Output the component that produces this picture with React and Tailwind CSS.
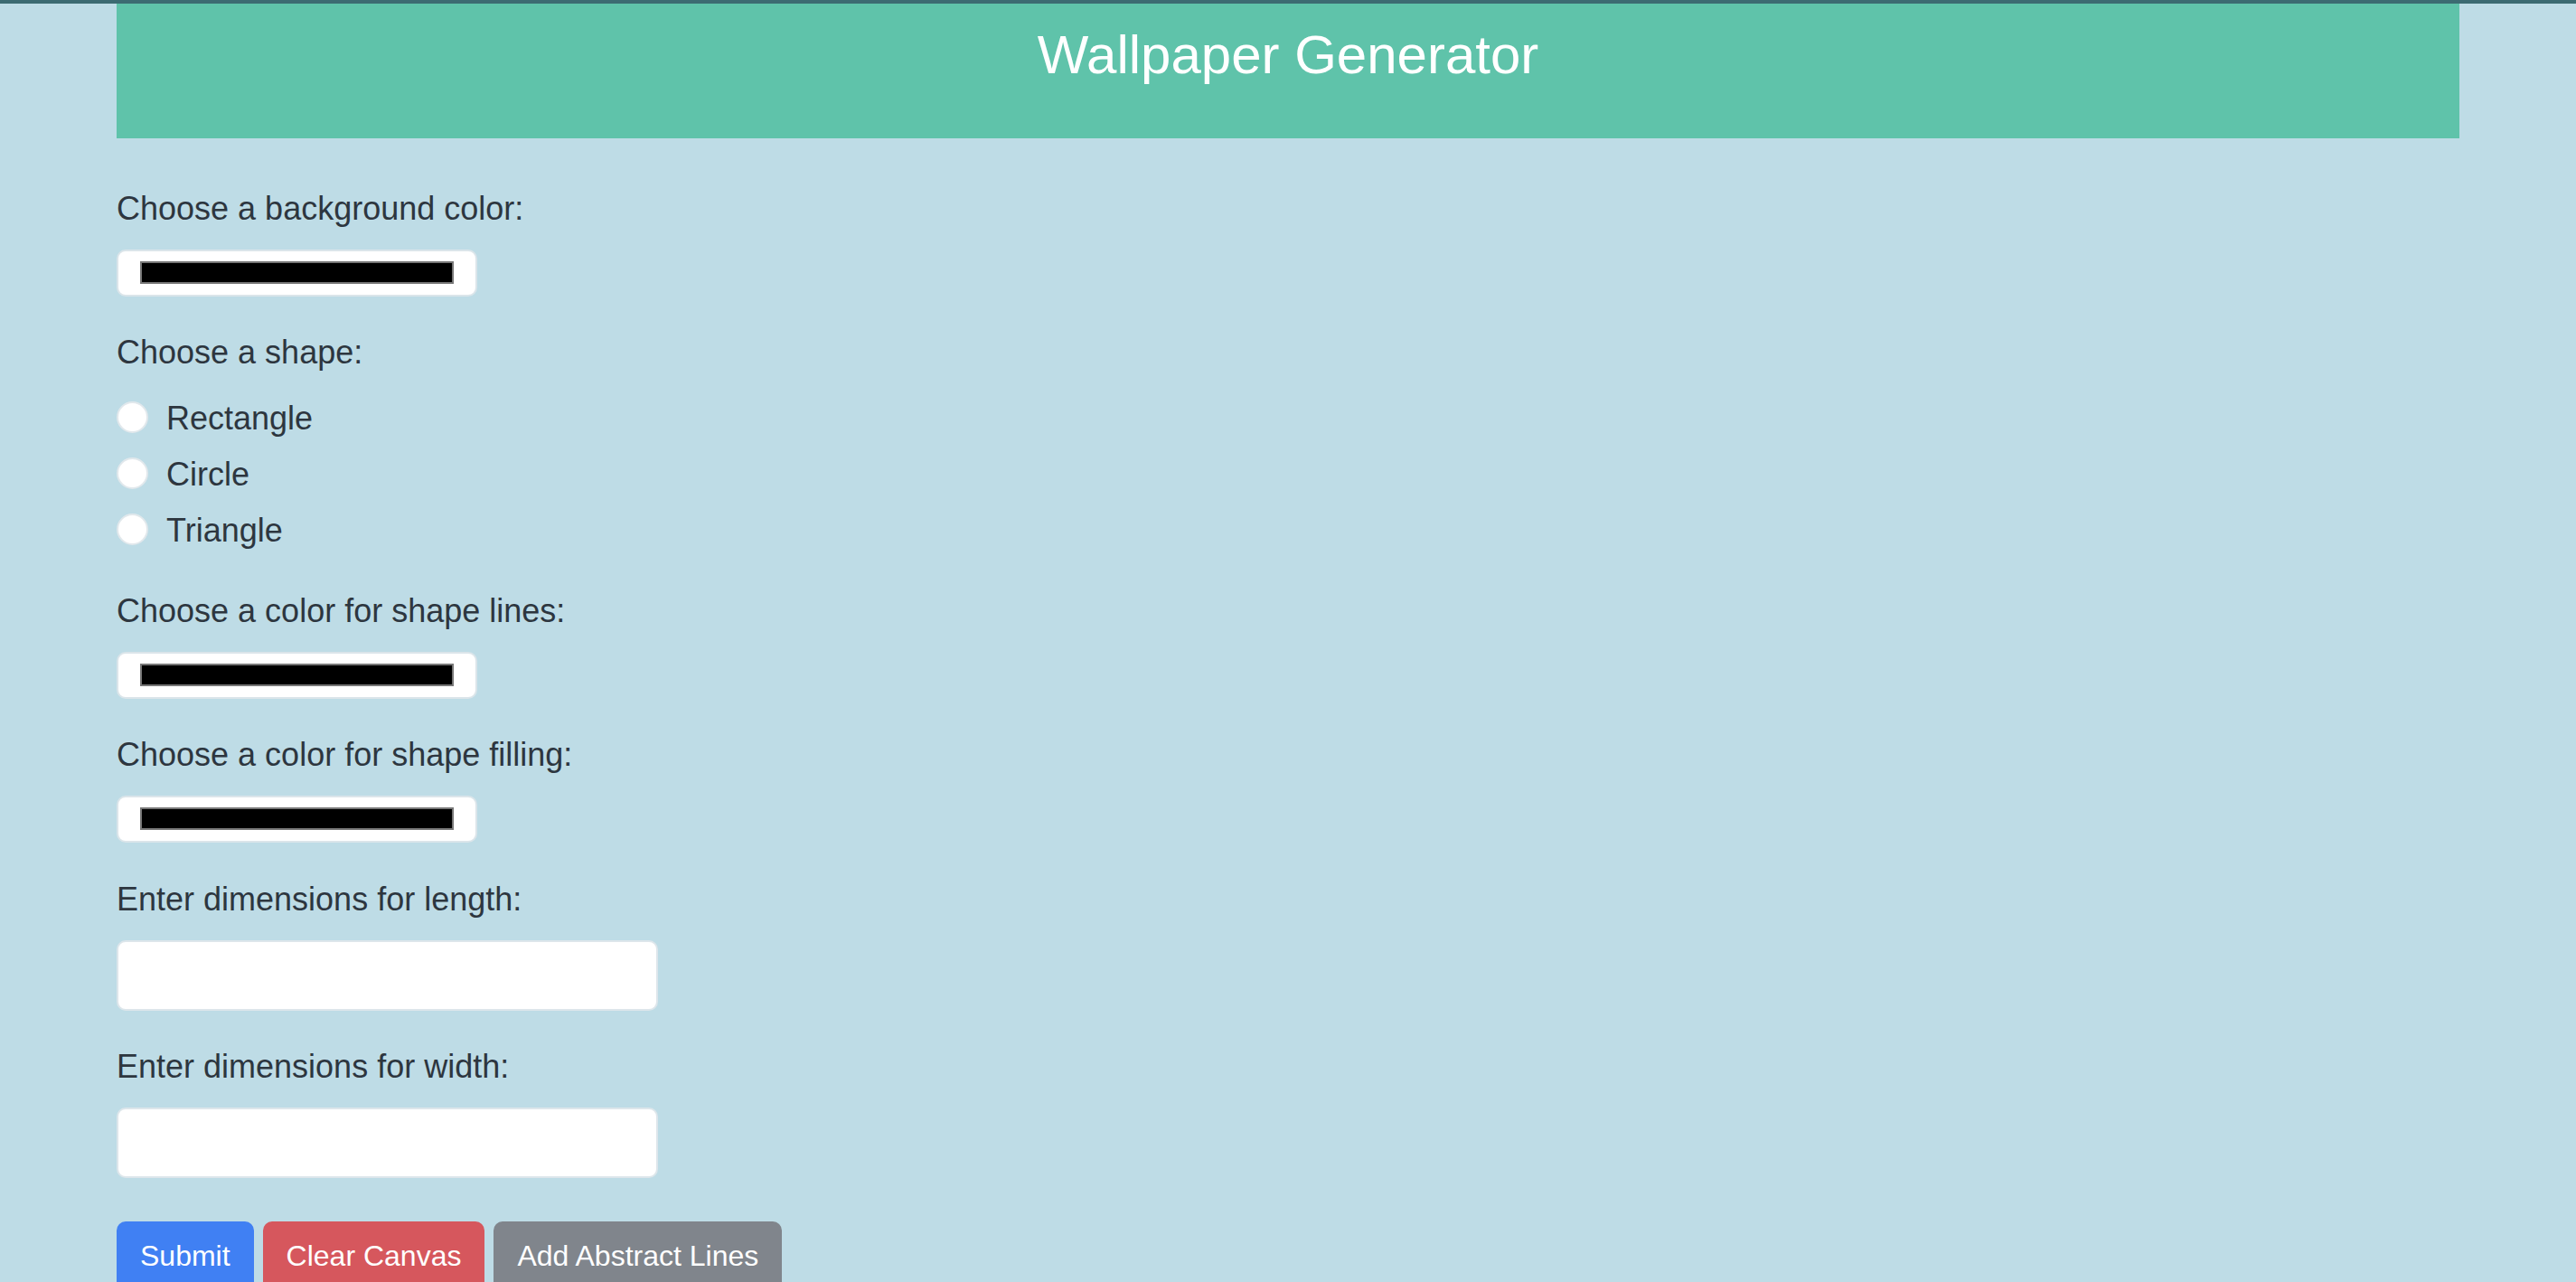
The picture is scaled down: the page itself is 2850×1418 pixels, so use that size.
import { useState } from "react";

const shapes = ["Rectangle", "Circle", "Triangle"];

function ColorField({ label, first }) {
	return (
		<div className={first ? "mt-[51px]" : "mt-[35px]"}>
			<label className="block text-[36px] leading-[54px] mb-[18px]">{label}</label>
			<div className="w-[399px] h-[52px] bg-white border-2 border-[#dbe5ea] rounded-[10px] px-[24px] py-[11px]">
				<div className="h-[25px] bg-black border-2 border-[#777777]"></div>
			</div>
		</div>
	);
}

function TextField({ label }) {
	return (
		<div className="mt-[35.5px]">
			<label className="block text-[36px] leading-[54px] mb-[18px]">{label}</label>
			<input
				type="text"
				className="block w-[599px] h-[78px] bg-white border-2 border-[#dde6eb] rounded-[10px] px-4 text-[32px] outline-none"
			/>
		</div>
	);
}

export default function App() {
	const [shape, setShape] = useState("");

	return (
		<div
			className="h-screen overflow-hidden bg-[#bedce6] text-[#2d363f]"
			style={{ fontFamily: '"Liberation Sans", Arial, sans-serif' }}
		>
			<div className="h-[4px] bg-[#3c6b72]"></div>
			<div className="px-[129px]">
				<header className="h-[149px] bg-[#5fc3aa] pt-[21px]">
					<h1 className="text-center text-white text-[60px] leading-[72px]">
						Wallpaper Generator
					</h1>
				</header>

				<ColorField label="Choose a background color:" first />

				<div className="mt-[35px]">
					<label className="block text-[36px] leading-[54px] mb-[19px]">
						Choose a shape:
					</label>
					<div className="flex flex-col gap-[8px]">
						{shapes.map((s) => (
							<label key={s} className="flex items-center h-[54px] text-[36px] leading-[54px]">
								<input
									type="radio"
									name="shape"
									checked={shape === s}
									onChange={() => setShape(s)}
									className="appearance-none w-[35px] h-[35px] rounded-full bg-white border-2 border-[#e1e8ec] mr-[20px] -mt-[4px]"
								/>
								{s}
							</label>
						))}
					</div>
				</div>

				<ColorField label="Choose a color for shape lines:" />
				<ColorField label="Choose a color for shape filling:" />
				<TextField label="Enter dimensions for length:" />
				<TextField label="Enter dimensions for width:" />

				<div className="flex gap-[10px] mt-[48px]">
					<button className="px-[26px] py-[14px] bg-[#4080f3] text-white text-[32px] leading-[48px] rounded-[10px]">
						Submit
					</button>
					<button className="px-[26px] py-[14px] bg-[#d6575d] text-white text-[32px] leading-[48px] rounded-[10px]">
						Clear Canvas
					</button>
					<button className="px-[26px] py-[14px] bg-[#80858c] text-white text-[32px] leading-[48px] rounded-[10px]">
						Add Abstract Lines
					</button>
				</div>
			</div>
		</div>
	);
}
